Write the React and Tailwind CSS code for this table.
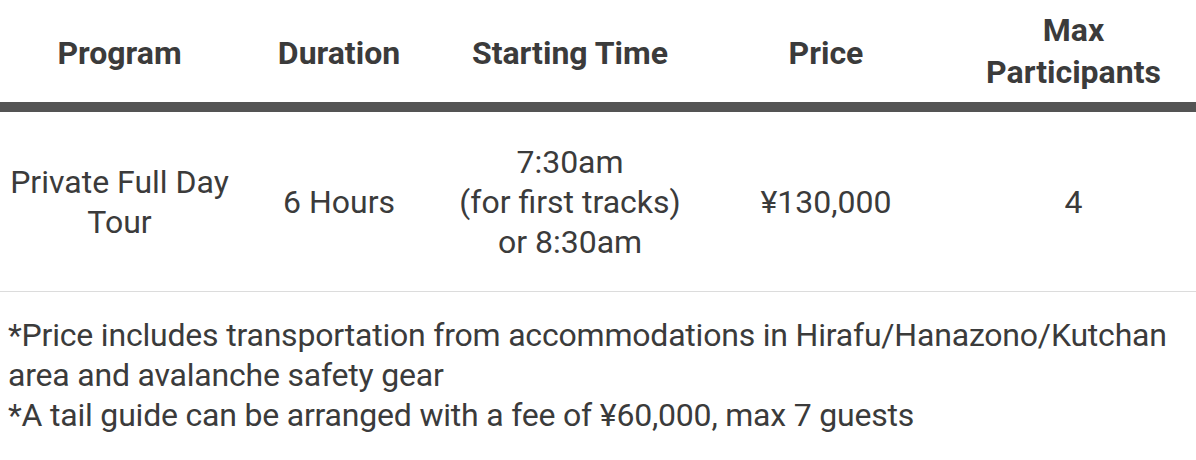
export default function App() {
  const cols = "grid grid-cols-[239px_200px_262px_250px_245px]";

  return (
    <div className="w-[1196px] h-[460px] bg-white text-[#3b3b3b] font-['Roboto','Liberation_Sans',sans-serif]">
      <div className={`${cols} h-[112px] border-b-[10px] border-[#545454] text-[32px] leading-[42px] font-bold text-center`}>
        <div className="flex items-center justify-center pt-1">Program</div>
        <div className="flex items-center justify-center pt-1">Duration</div>
        <div className="flex items-center justify-center pt-1">Starting Time</div>
        <div className="flex items-center justify-center pt-1">Price</div>
        <div className="flex items-center justify-center">
          Max
          <br />
          Participants
        </div>
      </div>

      <div className={`${cols} h-[180px] border-b border-[#dcdcdc] text-[32px] leading-[40px] text-center`}>
        <div className="flex items-center justify-center px-1">
          Private Full Day
          <br />
          Tour
        </div>
        <div className="flex items-center justify-center">6 Hours</div>
        <div className="flex items-center justify-center">
          7:30am
          <br />
          (for first tracks)
          <br />
          or 8:30am
        </div>
        <div className="flex items-center justify-center">¥130,000</div>
        <div className="flex items-center justify-center">4</div>
      </div>

      <div className="pt-[23px] pl-[8px] pr-2 text-[32px] leading-[40px] tracking-[-0.2px]">
        <p>*Price includes transportation from accommodations in Hirafu/Hanazono/Kutchan area and avalanche safety gear</p>
        <p>*A tail guide can be arranged with a fee of ¥60,000, max 7 guests</p>
      </div>
    </div>
  );
}
